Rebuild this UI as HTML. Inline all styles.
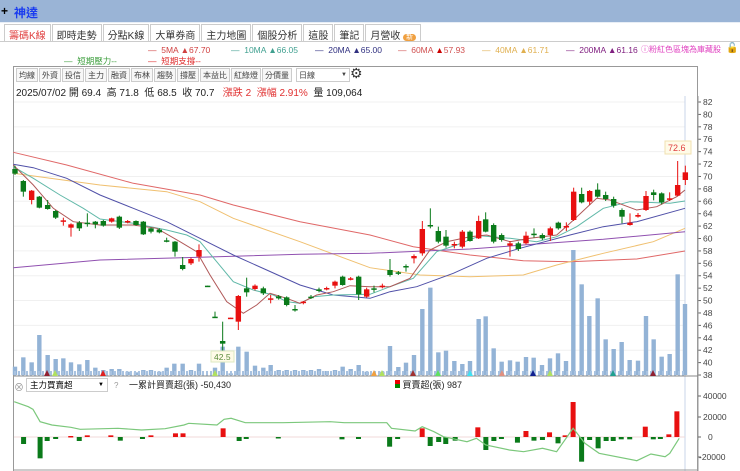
<!DOCTYPE html>
<html><head><meta charset="utf-8">
<style>
*{margin:0;padding:0;box-sizing:border-box}
body{width:740px;height:471px;overflow:hidden;background:#fff;font-family:"Liberation Sans","Noto Sans CJK TC",sans-serif;position:relative}
.abs{position:absolute;white-space:nowrap}
.hdr{left:0;top:0;width:740px;height:22px;background:#9ab4d6}
.tabs{left:4px;top:24px;height:17px;display:flex}
.tab{font-size:10px;color:#333;border:1px solid #ccc;border-bottom:none;padding:2px 4px 0;height:17px;margin-right:1px;background:#fff}
.btn{font-size:8px;color:#444;border:1px solid #ccc;padding:1px 2px;margin-right:1px;background:#f7f7f7;height:14px;line-height:11px}
.f9{font-size:8.5px}
</style></head><body>
<div class="abs hdr"></div>
<div class="abs" style="left:1px;top:4px;font-size:12px;font-weight:bold">+</div>
<div class="abs" style="left:14px;top:4px;font-size:12px;font-weight:bold;color:#1a3cf0">神達</div>
<div class="abs" style="left:0;top:22px;width:740px;height:1px;background:#e8eef6"></div>
<div class="abs tabs">
<div class="tab" style="color:#e04040">籌碼K線</div><div class="tab">即時走勢</div><div class="tab">分點K線</div><div class="tab">大單券商</div><div class="tab">主力地圖</div><div class="tab">個股分析</div><div class="tab">這股</div><div class="tab">筆記</div><div class="tab">月營收 <span style="background:#f0a040;color:#fff;border-radius:6px;font-size:7px;padding:0 3px">新</span></div>
</div>
<div class="abs" style="left:0;top:41px;width:740px;height:1px;background:#ccc"></div>
<div class="abs f9" style="left:148px;top:45px;color:#d04040">— &nbsp;5MA <span>▲67.70</span></div>
<div class="abs f9" style="left:231px;top:45px;color:#40a090">— &nbsp;10MA ▲66.05</div>
<div class="abs f9" style="left:315px;top:45px;color:#303080">— &nbsp;20MA ▲65.00</div>
<div class="abs f9" style="left:398px;top:45px;color:#d05050">— &nbsp;60MA <span style="color:#c00">▲</span>57.93</div>
<div class="abs f9" style="left:482px;top:45px;color:#e0b050">— &nbsp;40MA ▲61.71</div>
<div class="abs f9" style="left:566px;top:45px;color:#802080">— &nbsp;200MA ▲61.16</div>
<div class="abs" style="left:641px;top:44px;font-size:8px;color:#e040c0">ⓘ粉紅色區塊為庫藏股</div>
<div class="abs" style="left:726px;top:43px;font-size:10px">🔓</div>
<div class="abs f9" style="left:64px;top:55px;color:#40a040">— &nbsp;短期壓力--</div>
<div class="abs f9" style="left:148px;top:55px;color:#e03030">— &nbsp;短期支撐--</div>
<div class="abs" style="left:13px;top:66px;width:685px;height:405px;border:1px solid #999;border-bottom:none"></div>
<div class="abs" style="left:16px;top:68px;display:flex">
<div class="btn">均線</div><div class="btn">外資</div><div class="btn">投信</div><div class="btn">主力</div><div class="btn">融資</div><div class="btn">布林</div><div class="btn">趨勢</div><div class="btn">撐壓</div><div class="btn">本益比</div><div class="btn">紅綠燈</div><div class="btn">分價量</div>
<div class="btn" style="width:54px;background:#fff;margin-left:3px">日線 <span style="float:right;font-size:6px">▼</span></div>
</div>
<div class="abs" style="left:350px;top:65px;font-size:14px;color:#333">⚙</div>
<div class="abs" style="left:16px;top:84px;font-size:10px;color:#222">2025/07/02 開 69.4 &nbsp;高 71.8 &nbsp;低 68.5 &nbsp;收 70.7 &nbsp; <span style="color:#e03030">漲跌 2 &nbsp;漲幅 2.91%</span> &nbsp;量 109,064</div>
<svg class="abs" style="left:0;top:0" width="740" height="471" id="s"></svg>
<div class="abs" style="left:14px;top:379px;font-size:10px;color:#999">⊗</div>
<div class="abs" style="left:26px;top:378px;width:82px;height:14px;border:1px solid #ccc;font-size:8.5px;padding-left:3px;line-height:12px">主力買賣超<span style="float:right;font-size:6px;margin-right:3px">▼</span></div>
<div class="abs" style="left:114px;top:381px;font-size:8px;color:#999">?</div>
<div class="abs" style="left:129px;top:378px;font-size:9px;color:#222">一累計買賣超(張) -50,430</div>
<div class="abs" style="left:395px;top:378px;font-size:9px;color:#222"><span style="display:inline-block;width:5px;height:8px;background:linear-gradient(#e00 50%,#080 50%)"></span> 買賣超(張) 987</div>
<script>
var s=document.getElementById('s'),h='';
function L(x1,y1,x2,y2,c,w){h+='<line x1="'+x1+'" y1="'+y1+'" x2="'+x2+'" y2="'+y2+'" stroke="'+c+'" stroke-width="'+(w||1)+'"/>';}
function R(x,y,w,hh,c){h+='<rect x="'+x+'" y="'+y+'" width="'+w+'" height="'+hh+'" fill="'+c+'"/>';}
function T(x,y,t,c,fs){h+='<text x="'+x+'" y="'+y+'" font-size="'+(fs||9)+'" fill="'+(c||'#333')+'" font-family="Liberation Sans">'+t+'</text>';}
for(var p=38;p<=82;p+=2){var y=102+(82-p)*6.205;if(p%4==2&&p>38)L(14,y,685,y,'#f0f0f0');L(698,y,701,y,'#666');T(703,y+3,p,'#444',8.5);}
L(698,96,698,471,'#999');L(685,96,685,471,'#c8d4ea');
var V=[[0,45,815],[0,70,787],[0,95,802],[0,118,720],[0,143,780],[0,167,792],[0,190,790],[0,213,802],[0,238,808],[0,262,795],[0,286,818],[0,310,825],[0,335,822],[0,358,822],[0,383,830],[0,408,832],[0,430,825],[0,453,825],[0,478,830],[0,500,818],[0,523,806],[0,548,806],[0,573,825],[0,597,806],[0,645,818],[0,668,755],[0,692,835],[0,715,755],[0,740,770],[0,765,812],[0,790,818],[0,812,810],[0,836,825],[0,860,825],[0,885,825],[0,910,825],[0,933,825],[0,957,822],[0,980,828],[0,1005,825],[0,1028,815],[0,1052,822],[0,1076,810],[0,1100,830],[1,37,830],[1,60,753],[1,85,816],[1,108,803],[1,132,780],[1,157,642],[1,181,578],[1,205,772],[1,228,767],[1,253,798],[1,277,807],[1,300,798],[1,326,672],[1,347,664],[1,371,760],[1,395,800],[1,420,796],[1,443,800],[1,468,786],[1,491,788],[1,516,810],[1,540,790],[1,564,775],[1,588,798],[1,610,465],[1,635,568],[1,658,663],[1,683,610],[1,707,733],[1,731,762],[1,755,741],[1,779,795],[1,804,797],[1,828,663],[1,851,733],[1,875,785],[1,899,777],[1,923,538],[1,945,627]];
V.forEach(function(v){var x=v[0]*370+v[1]/3,y=95+v[2]/3;R(x-2.2,y,4.4,375-y,'#93b3d6');});
for(var x=14;x<685;x+=4)R(x,371,2,5,'#a8c2e0');
L(14,376,698,376,'#888');
function P(pts,c){var d='';pts.forEach(function(q,i){d+=(i?'L':'M')+(q[0]*370+q[1]/3).toFixed(1)+' '+(95+q[2]/3).toFixed(1)+' ';});h+='<path d="'+d+'" fill="none" stroke="'+c+'" stroke-width="1"/>';}
function A(a,b){return a.map(function(q){return[0,q[0],q[1]]}).concat(b.map(function(q){return[1,q[0],q[1]]}));}
P(A([[40,172],[200,210],[400,265],[600,300],[700,330],[900,380],[1110,420]],[[130,455],[300,480],[460,497],[600,500],[800,492],[945,468]]),'#e06868');
P(A([[40,235],[300,270],[500,290],[600,320],[700,370],[900,440],[1110,518]],[[150,540],[300,545],[460,540],[560,510],[700,475],[850,440],[945,400]]),'#f0c070');
P(A([[40,518],[300,495],[600,487],[900,478],[1110,475]],[[300,462],[500,447],[700,433],[945,410]]),'#9050b0');
P(A([[40,208],[100,218],[200,250],[300,300],[400,340],[500,380],[600,430],[700,480],[800,525],[900,570],[1000,600],[1110,610]],[[60,590],[140,575],[250,535],[350,490],[450,460],[600,420],[700,395],[800,380],[945,340]]),'#5050a8');
P(A([[40,215],[100,250],[180,300],[250,340],[300,372],[400,385],[500,405],[560,420],[600,440],[650,500],[700,560],[760,585],[820,600],[860,620],[900,625],[940,605],[1000,600],[1110,598]],[[60,575],[130,550],[200,470],[260,450],[330,422],[420,430],[500,440],[560,425],[620,395],[700,340],[780,320],[900,325],[945,318]]),'#60b8a8');
P(A([[40,210],[100,270],[160,340],[220,380],[300,390],[400,390],[470,400],[540,440],[590,470],[630,540],[680,620],[730,655],[770,630],[810,595],[860,610],[900,625],[950,600],[1000,590],[1050,572],[1110,575]],[[60,575],[120,550],[180,465],[230,440],[300,425],[350,420],[420,440],[480,430],[560,420],[600,385],[680,310],[720,315],[800,345],[860,335],[920,305],[945,285]]),'#b05858');
var G='#0a7a1a',Rd='#e81010';
var C=[[0,45,222,236,G,212,240],[0,70,258,290,G,255,305],[0,95,287,315,Rd,285,328],[0,118,305,338,G,303,340],[0,143,330,342,G,315,344],[0,167,348,368,G,345,372],[0,190,376,380,Rd,368,392],[0,213,388,398,Rd,385,425],[0,238,383,400,G,378,408],[0,262,383,386,G,355,395],[0,286,380,388,G,378,400],[0,310,378,392,G,375,395],[0,335,370,380,Rd,368,383],[0,358,365,398,G,362,402],[0,383,378,381,Rd,375,385],[0,408,378,390,G,376,392],[0,430,380,418,G,378,420],[0,453,400,410,G,398,415],[0,478,404,412,G,400,415],[0,500,436,439,G,428,442],[0,525,440,470,G,438,485],[0,548,510,522,G,486,526],[0,573,492,505,Rd,488,510],[0,597,465,485,Rd,448,500],[0,623,572,575,G,572,575],[0,645,665,668,G,650,668],[0,668,738,746,G,680,790],[0,692,668,670,Rd,668,670],[0,715,603,680,Rd,600,705],[0,740,580,592,G,548,605],[0,765,572,582,Rd,568,586],[0,790,580,595,G,575,600],[0,812,610,612,Rd,600,625],[0,836,604,610,G,600,614],[0,860,607,630,G,604,634],[0,885,642,645,G,630,650],[0,910,620,623,Rd,618,628],[0,933,605,608,G,600,612],[0,957,583,588,G,578,592],[0,980,579,582,Rd,575,586],[0,1005,560,572,Rd,557,580],[0,1028,545,570,G,542,572],[0,1052,550,553,Rd,546,556],[0,1076,545,598,G,542,615],[0,1100,583,605,Rd,578,608],
[1,12,580,583,G,572,592],[1,37,572,575,Rd,566,580],[1,60,525,540,G,492,545],[1,85,532,535,G,528,540],[1,108,513,516,G,508,530],[1,132,483,490,Rd,478,505],[1,157,402,475,Rd,378,482],[1,181,390,393,G,340,400],[1,205,408,440,G,395,445],[1,228,425,452,G,405,458],[1,253,447,450,Rd,440,460],[1,277,410,455,Rd,405,460],[1,300,410,438,G,406,440],[1,326,378,430,Rd,362,432],[1,347,373,410,G,352,412],[1,371,390,440,G,385,445],[1,395,420,435,G,415,440],[1,420,445,452,Rd,438,485],[1,445,445,462,G,440,468],[1,468,422,445,Rd,410,448],[1,492,416,419,G,400,428],[1,517,420,430,G,415,435],[1,541,400,420,Rd,395,438],[1,565,383,400,G,380,404],[1,589,393,396,Rd,382,408],[1,611,290,375,Rd,278,378],[1,635,297,322,G,278,325],[1,659,288,320,Rd,285,330],[1,683,284,305,G,265,308],[1,707,300,312,G,290,318],[1,731,312,332,G,305,338],[1,756,345,365,G,340,385],[1,780,383,390,Rd,355,392],[1,804,360,365,Rd,354,368],[1,828,303,345,Rd,288,348],[1,851,292,300,G,284,316],[1,875,295,322,G,292,328],[1,899,310,314,Rd,292,318],[1,923,270,302,Rd,198,304],[1,946,232,255,Rd,212,270]];
C.forEach(function(c){var x=c[0]*370+c[1]/3,t=95+c[2]/3,b=95+c[3]/3;L(x,95+c[5]/3,x,95+c[6]/3,c[4]);R(x-2.7,t,5.4,Math.max(b-t,1.5),c[4]);});
[[47,'#902030'],[55,'#b0e060'],[103,'#e02020'],[215,'#b0e060'],[374,'#f0a040'],[382,'#b0e060'],[413,'#a03030'],[438,'#60e060'],[470,'#40e0f0'],[502,'#e09080'],[533,'#102090'],[550,'#b0e060'],[613,'#20a090'],[653,'#902030']].forEach(function(t){h+='<polygon points="'+(t[0]-3)+',376 '+(t[0]+3)+',376 '+t[0]+',370" fill="'+t[1]+'"/>';});
R(211,351,23,11,'#fffbe8');h+='<rect x="211" y="351" width="23" height="11" fill="none" stroke="#dde8c0"/>';T(214,360,'42.5','#5a8a3a',8.5);
R(665,141,26,13,'#fffbe8');h+='<rect x="665" y="141" width="26" height="13" fill="none" stroke="#f0e0b0"/>';T(668,151,'72.6','#e04040',9);
[[40000,396],[20000,417],[0,437],[-20000,457]].forEach(function(a){L(698,a[1],701,a[1],'#666');T(a[0]<0?699:(a[0]?703:708),a[1]+3,a[0],'#444',8.5);});
L(14,437,685,437,'#f0d8d8');
var B=[[150,198,Rd],[185,196,Rd],[235,196,Rd],[320,196,Rd],[372,190,Rd],[388,190,Rd],[473,175,Rd],[895,175,Rd],[1013,172,Rd],[1115,183,Rd],[1165,187,Rd],[1198,196,Rd],[1215,96,Rd],[1368,170,Rd],[1418,193,Rd],[1435,124,Rd],[50,222,G],[85,265,G],[100,213,G],[118,207,G],[168,213,G],[255,212,G],[302,207,G],[507,213,G],[522,207,G],[590,205,G],[725,208,G],[760,207,G],[826,230,G],[843,207,G],[912,228,G],[930,216,G],[945,222,G],[965,212,G],[1030,240,G],[1047,213,G],[1063,207,G],[1097,218,G],[1132,212,G],[1150,210,G],[1183,220,G],[1233,275,G],[1250,210,G],[1268,235,G],[1285,213,G],[1300,213,G],[1317,208,G],[1335,208,G],[1385,208,G],[1400,207,G]];
B.forEach(function(b){var x=b[0]/2.12,y=370+b[1]/3;var t=Math.min(y,437),bb=Math.max(y,437);R(x-2.5,t,5,Math.max(bb-t,1.5),b[2]);});
var g=[[30,95],[60,110],[70,118],[85,155],[110,165],[150,172],[170,178],[250,175],[300,180],[350,176],[390,165],[400,160],[460,165],[475,148],[490,145],[520,158],[600,158],[700,155],[730,158],[780,158],[820,158],[830,175],[880,183],[895,170],[920,185],[940,200],[990,215],[1010,205],[1030,225],[1080,240],[1110,245],[1150,235],[1180,245],[1215,175],[1240,220],[1270,250],[1350,272],[1380,252],[1410,260],[1420,250],[1440,205]];
var d='';g.forEach(function(q,i){d+=(i?'L':'M')+(q[0]/2.12).toFixed(1)+' '+(370+q[1]/3).toFixed(1)+' ';});
h+='<path d="'+d+'" fill="none" stroke="#7cc87c" stroke-width="1.2"/>';
L(13,470,698,470,'#999');
s.innerHTML=h;
</script>
</body></html>
